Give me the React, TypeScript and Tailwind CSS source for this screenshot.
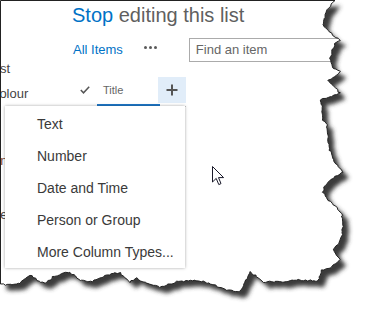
import React from 'react';

// key points of the torn paper edge, clockwise from top-left
const EDGE: [number, number][] = [
  [0.5, 0.5], [335, 0.5],
  [333, 3], [327, 10], [325, 17], [323, 25], [328, 30], [333, 35], [335, 38], [340, 40], [335, 43],
  [332, 50], [330, 60], [332, 67], [340, 72], [335, 77], [327, 80], [333, 86], [337, 90], [340, 93],
  [330, 97], [321, 100], [322, 110], [323, 120], [327, 125], [328, 140], [330, 150], [333, 160],
  [340, 168], [343, 172], [333, 178], [325, 185], [323, 192], [328, 200], [337, 207], [342, 215],
  [343, 225], [342, 235], [338, 245], [333, 250], [337, 255], [340, 260], [337, 262], [333, 265],
  [330, 268], [322, 270], [320, 275], [318, 281],
  [300, 280], [280, 282], [263, 282], [257, 277], [250, 272], [245, 282], [240, 292], [227, 290],
  [213, 285], [205, 282], [190, 280], [177, 282], [160, 287], [145, 283], [137, 278], [130, 282],
  [120, 273], [113, 273], [103, 277], [90, 282], [80, 280], [70, 273], [63, 273], [53, 277],
  [45, 283], [37, 280], [30, 275], [27, 277], [20, 283], [10, 285], [0.5, 284],
];

const buildEdge = () => {
  let seed = 11;
  const rnd = () => {
    seed = (seed * 16807) % 2147483647;
    return seed / 2147483647 - 0.5;
  };
  const pts: string[] = [`M${EDGE[0][0]} ${EDGE[0][1]}`, `L${EDGE[1][0]} ${EDGE[1][1]}`];
  for (let i = 1; i < EDGE.length - 1; i++) {
    const [ax, ay] = EDGE[i];
    const [bx, by] = EDGE[i + 1];
    const steps = Math.max(1, Math.floor(Math.hypot(bx - ax, by - ay) / 2));
    for (let s = 1; s <= steps; s++) {
      const t = s / steps;
      const last = i === EDGE.length - 2 && s === steps;
      const jx = last ? 0 : rnd() * 1.6;
      const jy = last ? 0 : rnd() * 1.6;
      pts.push(`L${(ax + (bx - ax) * t + jx).toFixed(1)} ${(ay + (by - ay) * t + jy).toFixed(1)}`);
    }
  }
  return pts.join(' ') + ' Z';
};

const paper = buildEdge();
const outside = `M0 0 H367 V316 H0 Z ${paper}`;

const TornEdge = () => (
  <svg width="367" height="316" className="pointer-events-none absolute inset-0">
    <defs>
      <filter id="soft" x="-10%" y="-10%" width="120%" height="120%">
        <feGaussianBlur stdDeviation="2" />
      </filter>
      <clipPath id="outside">
        <path d={outside} clipRule="evenodd" />
      </clipPath>
    </defs>
    <path d={outside} fill="#ffffff" fillRule="evenodd" />
    <g clipPath="url(#outside)">
      <path d={paper} transform="translate(6 6)" fill="#3a3a3a" filter="url(#soft)" />
    </g>
    <path d={paper} fill="none" stroke="#222222" strokeWidth="1" />
  </svg>
);

const Cursor = () => (
  <svg width="13" height="21" viewBox="0 0 13 21" className="absolute left-[212px] top-[166px]">
    <path
      d="M0.5 0.5 L0.5 16 L4.2 12.4 L6.8 18.6 L9 17.6 L6.5 11.6 L11.6 11.6 Z"
      fill="#ffffff"
      stroke="#1a1a2a"
      strokeWidth="1"
      strokeLinejoin="miter"
    />
  </svg>
);

const menuItems = ['Text', 'Number', 'Date and Time', 'Person or Group', 'More Column Types...'];

export default function App() {
  return (
    <div className="relative h-[316px] w-[367px] overflow-hidden bg-white font-['Liberation_Sans',Arial,sans-serif]">
      <div className="flex">
        <nav className="w-[72px] shrink-0 overflow-hidden pt-[61px] text-[13px] leading-4 text-[#444]">
          <div className="-ml-[10px] whitespace-nowrap">List</div>
          <div className="-ml-[10px] mt-[9px] whitespace-nowrap">Colour</div>
          <div className="-ml-[33px] mt-[51px] whitespace-nowrap text-[#7a4a3a]">Design</div>
          <div className="-ml-[15px] mt-[38px] whitespace-nowrap">Site</div>
        </nav>

        <main className="min-w-0 flex-1 pt-[3px]">
          <h1 className="whitespace-nowrap text-[20px] leading-6">
            <span className="text-[#0072c6]">Stop</span>
            <span className="text-[#5f5f5f]"> editing this list</span>
          </h1>

          <div className="mt-[11px] flex h-6 items-center">
            <span className="ml-px whitespace-nowrap text-[13px] leading-4 text-[#0072c6]">All Items</span>
            <div className="mb-[6px] ml-[21px] flex gap-[2px]">
              <span className="h-[3px] w-[3px] rounded-full bg-[#5a5a5a]" />
              <span className="h-[3px] w-[3px] rounded-full bg-[#5a5a5a]" />
              <span className="h-[3px] w-[3px] rounded-full bg-[#5a5a5a]" />
            </div>
            <div className="ml-[32px] h-6 w-[170px] shrink-0 whitespace-nowrap border border-[#ababab] pl-[6px] text-[13px] leading-[22px] text-[#666]">
              Find an item
            </div>
          </div>

          <div className="ml-px mt-[14px] w-[113px]">
            <div className="flex h-[28px] items-center">
              <div className="w-[24px] pl-[7px]">
                <svg width="10" height="8" viewBox="0 0 10 8">
                  <polyline points="0.8,4 3.5,6.8 9.2,0.8" fill="none" stroke="#555" strokeWidth="1.5" />
                </svg>
              </div>
              <div className="w-[61px] pl-[6px] text-[11px] text-[#666]">Title</div>
              <div className="flex h-[26px] w-[28px] items-center justify-center bg-[#e1edf9]">
                <svg width="12" height="12" viewBox="0 0 12 12">
                  <path d="M6 0.5 V11.5 M0.5 6 H11.5" stroke="#555" strokeWidth="2" />
                </svg>
              </div>
            </div>
            <div className="flex h-[3px] items-end">
              <div className="h-px w-[24px] bg-[#c6c6c6]" />
              <div className="h-[3px] w-[63px] bg-[#1f78c8]" />
              <div className="h-px flex-1 bg-[#c6c6c6]" />
            </div>
          </div>
        </main>
      </div>

      <div className="absolute left-[5px] top-[106px] w-[180px] bg-white pt-[2px] shadow-[0_0_3px_rgba(0,0,0,0.35)]">
        {menuItems.map((item) => (
          <div key={item} className="flex h-8 items-center whitespace-nowrap pl-[32px] text-[14px] text-[#3a3a3a]">
            {item}
          </div>
        ))}
      </div>

      <Cursor />
      <TornEdge />
    </div>
  );
}
